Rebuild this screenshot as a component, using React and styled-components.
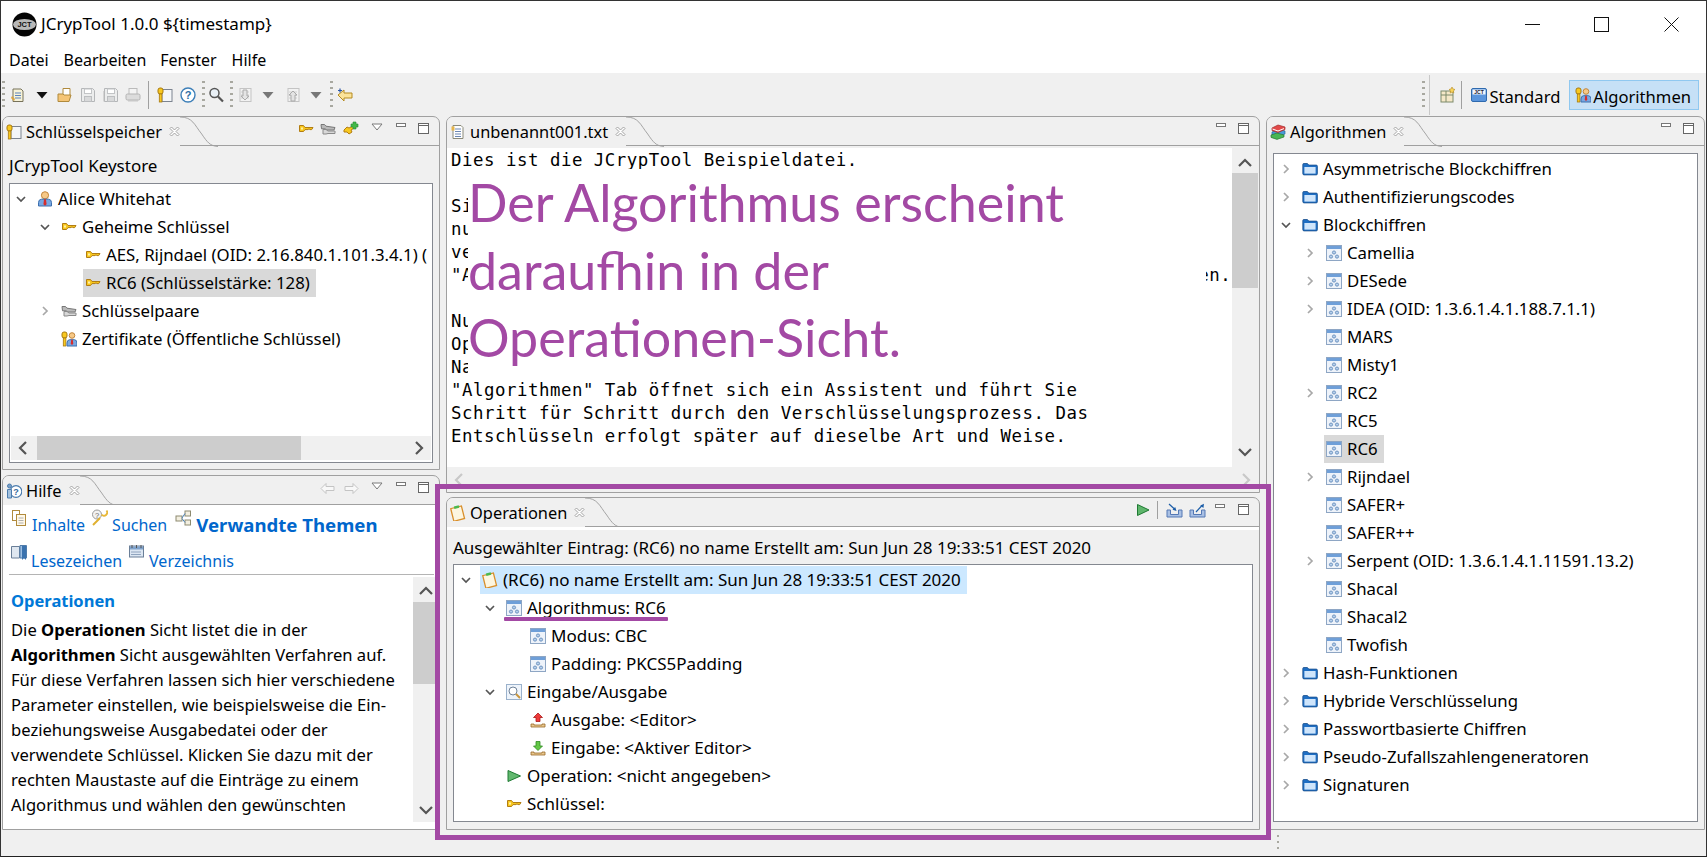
import React from "react";
import styled, { createGlobalStyle } from "styled-components";

const Global = createGlobalStyle`
  html, body { margin: 0; padding: 0; background: #f0f0f0; }
  * { box-sizing: border-box; }
`;
const UI = `"Noto Sans", "Open Sans", sans-serif`;

const Win = styled.div`
  position: relative; width: 1707px; height: 857px; overflow: hidden;
  display: flex; flex-direction: column; border: 1px solid #333; border-bottom-color: #222;
  background: #f0f0f0; color: #000; font: 16px/22px ${UI};
`;
const TitleBar = styled.div`display: flex; align-items: center; height: 46px; background: #fff; padding-left: 11px;`;
const TitleText = styled.span`margin-left: 4px; font-size: 17px;`;
const WinControls = styled.div`display: flex; margin-left: auto; height: 100%;`;
const WinBtn = styled.div`display: flex; align-items: center; justify-content: center; width: ${p => p.$w}px;`;
const MenuBar = styled.div`display: flex; height: 26px; align-items: center; background: #fff; padding-left: 8px; font-size: 16px;`;
const MenuItem = styled.span`margin-right: ${p => p.$mr}px;`;

const Toolbar = styled.div`display: flex; align-items: center; height: 43px; padding: 0 7px 0 1px;`;
const Slot = styled.div`display: flex; margin-left: ${p => p.$ml}px; margin-top: ${p => p.$mt || 0}px; flex: none;`;
const Grip = styled.div`
  width: 3px; height: 28px; margin-left: ${p => p.$ml}px; flex: none;
  background: repeating-linear-gradient(to bottom, #a8a8a0 0 2px, transparent 2px 6px);
`;
const VSep = styled.div`width: 1px; height: ${p => p.$h || 28}px; background: #a0a0a0; margin-left: ${p => p.$ml}px; flex: none;`;
const Perspectives = styled.div`display: flex; align-items: center; margin-left: auto; height: 100%;`;
const PerspBar = styled.div`
  display: flex; align-items: center; height: 40px; margin-left: 4px; padding-left: 10px; border-left: 1px solid #c8c8c8;
`;
const PerspBtn = styled.div`
  display: flex; align-items: center; gap: 2px; height: 30px; padding: 0 7px 0 5px; font-size: 16.6px;
  margin-left: ${p => p.$ml}px;
  background: ${p => p.$on ? "#c6e0f6" : "transparent"};
  border: 1px solid ${p => p.$on ? "#90c8f0" : "transparent"};
  span { position: relative; top: 2px; }
`;

const Main = styled.div`
  flex: 1; display: grid; grid-template-columns: 438px 814px 439px; column-gap: 6px; padding: 0 1px; min-height: 0;
`;
const Col = styled.div`display: flex; flex-direction: column; gap: ${p => p.$gap}px; min-height: 0;`;
const Panel = styled.section`
  display: flex; flex-direction: column; height: ${p => p.$h ? p.$h + "px" : "100%"}; flex: none;
  border: 1px solid #a0a0a0; border-radius: 7px 7px 0 0; background: #f0f0f0; min-width: 0; overflow: hidden;
`;
const TabBar = styled.div`
  display: flex; align-items: stretch; height: 29px; flex: none; border-bottom: 1px solid #a0a0a0;
`;
const Tab = styled.div`
  display: flex; align-items: center; padding-left: 3px; margin-bottom: -1px; background: #f0f0f0; height: 29px;
  font-size: ${p => p.$fs || 16.4}px;
`;
const TabLabel = styled.span`margin-left: 4px;`;
const TabClose = styled.span`display: flex; margin-left: 7px;`;
const TabCurve = styled.svg`width: 38px; height: 30px; margin-bottom: -1px; flex: none; display: block;`;
const TabTools = styled.div`display: flex; align-items: center; margin-left: auto; padding: 0 10px 4px 0;`;

const Pad = styled.div`
  flex: 1; min-height: 0; display: flex; flex-direction: column; padding: 0 ${p => p.$x}px ${p => p.$b}px;
  border-top: ${p => p.$stripe ? "3px solid #fff" : "none"};
`;
const Caption = styled.div`
  height: ${p => p.$h}px; display: flex; align-items: center; flex: none; white-space: nowrap; font-size: 17px;
  padding-top: ${p => p.$t || 0}px;
`;
const TreeBox = styled.div`
  flex: 1; min-height: 0; background: #fff; border: 1px solid #848890; display: flex; flex-direction: column;
  padding-top: 1px; overflow: hidden;
`;
const Rows = styled.div`flex: 1; min-height: 0; overflow: hidden; font-size: ${p => p.$fs}px;`;
const Row = styled.div`
  display: flex; align-items: center; height: 28px; white-space: nowrap;
  padding-left: ${p => p.$base + p.$level * 24}px;
`;
const Twist = styled.div`display: flex; align-items: center; justify-content: center; width: 16px; flex: none;`;
const Item = styled.div`
  display: flex; align-items: center; gap: 5px; height: 28px; margin-left: 6px; padding: 0 6px 0 2px;
  background: ${p => p.$sel === "blue" ? "#cce8ff" : p.$sel ? "#d9d9d9" : "transparent"};
`;
const Underlined = styled.span`
  position: relative;
  &::after { content: ""; position: absolute; left: -23px; right: -2px; bottom: -2px; height: 4px; background: #a349a4; border-radius: 1px; }
`;

const HBar = styled.div`
  display: flex; align-items: center; height: ${p => p.$h}px; margin: ${p => p.$m || "0"}; background: #f0f0f0; flex: none;
`;
const HArrow = styled.div`width: 26px; display: flex; justify-content: center; flex: none; height: 100%; align-items: center;`;
const HTrack = styled.div`flex: 1; height: 100%;`;
const HThumb = styled.div`height: 100%; width: ${p => p.$w}px; background: #cdcdcd;`;
const VBar = styled.div`
  display: flex; flex-direction: column; width: ${p => p.$w}px; background: #f0f0f0; flex: none;
`;
const VArrow = styled.div`
  height: 25px; flex: none; display: flex; align-items: center; justify-content: center;
  padding-top: ${p => p.$pt || 0}px; padding-bottom: ${p => p.$pb || 0}px;
`;
const VTrack = styled.div`flex: 1; min-height: 0;`;
const VThumb = styled.div`height: ${p => p.$h}px; background: #cdcdcd;`;

const EditorBody = styled.div`position: relative; flex: 1; min-height: 0; display: flex; flex-direction: column; padding: 2px 1px 0 0;`;
const EditorTop = styled.div`flex: 1; min-height: 0; display: flex;`;
const Code = styled.pre`
  flex: 1; margin: 0; padding: 1px 0 0 4px; background: #fff; overflow: hidden;
  font: 17.4px/23px "DejaVu Sans Mono", "Liberation Mono", monospace; letter-spacing: 0.52px;
`;
const Callout = styled.div`
  position: absolute; left: 21px; top: 23px; width: 738px; height: 208px; background: #fff;
  color: #a349a4; font: 52px/67.5px Lato, "Open Sans", sans-serif; white-space: nowrap;
`;
const AnnotationFrame = styled.div`
  position: absolute; left: 434px; top: 483px; width: 836px; height: 356px; border: 5px solid #a349a4; pointer-events: none;
`;

const HelpBody = styled.div`flex: 1; min-height: 0; background: #fff; display: flex; flex-direction: column; padding-top: 2px;`;
const LinkRow = styled.div`display: flex; align-items: flex-start; height: ${p => p.$h}px; flex: none; padding-left: ${p => p.$l}px;`;
const HelpLink = styled.a`
  color: #0066cc; margin-left: ${p => p.$ml}px; margin-top: ${p => p.$mt}px; font-size: ${p => p.$b ? 18.6 : 16}px; font-weight: ${p => p.$b ? 700 : 400};
  white-space: nowrap;
`;
const IconAt = styled.div`display: flex; margin-left: ${p => p.$ml}px; margin-top: ${p => p.$mt}px; flex: none;`;
const HelpRule = styled.div`height: 1px; background: #b4b4b4; margin: 0 5px 0 6px; flex: none;`;
const HelpMain = styled.div`flex: 1; min-height: 0; display: flex; padding: 2px 0 7px;`;
const HelpText = styled.div`flex: 1; padding: 12px 0 0 8px; overflow: hidden; white-space: nowrap; font-size: 16.6px;`;
const HelpHead = styled.div`color: #0078d7; font-weight: 700; font-size: 16.5px; line-height: 25px; margin-bottom: 3px; margin-top: -1px;`;
const HelpLine = styled.div`line-height: 25px; height: 25px; position: relative; top: 1px;`;
const StatusBar = styled.div`height: 26px; flex: none; position: relative; display: flex; align-items: center; padding-left: 1276px;`;
const StatusGrip = styled.div`width: 2px; height: 16px; background: repeating-linear-gradient(to bottom, #a8a8a0 0 2px, transparent 2px 6px);`;

/* ------- icons ------- */
const Svg = ({ w = 16, h = 16, children, vb }) => <svg width={w} height={h} viewBox={vb || `0 0 ${w} ${h}`} style={{ display: "block", flex: "none" }}>{children}</svg>;
const Down = ({ c = "#555" }) => <Svg w={12} h={12}><path d="M2 4l4 4 4-4" fill="none" stroke={c} strokeWidth="1.7" /></Svg>;
const Right = ({ c = "#a8a8a8" }) => <Svg w={12} h={12}><path d="M4 2l4 4-4 4" fill="none" stroke={c} strokeWidth="1.7" /></Svg>;
const Key = () => <Svg><path d="M1.5 4.5H5.5L7 6.5H15L13.7 8.6H12L11 7.8 10 8.6H7L5.5 10.5H1.5Z" fill="#f8c81e" stroke="#b27d12" /><path d="M3 6.5h2v2H3z" fill="#fff0a8" /></Svg>;
const KeyPair = () => <Svg><path d="M1 3.5H4.5L6 5.2 15 6.5 14 9H7L5 7.8H1.5Z" fill="#b9b9b9" stroke="#777" /><path d="M3 8.5H6L8 10H15V12.5H8L6 13H3Z" fill="#d8d8d8" stroke="#8a8a8a" /></Svg>;
const KeyAdd = () => <Svg w={16} h={16}><path d="M1 9l3-3 2 1 6-3 1 2-5 3 1 2-3 2-2-2-3 0z" fill="#f8c81e" stroke="#b27d12" /><path d="M10 1h3v2h2v3h-2v2h-3V6H8V3h2z" fill="#42b84a" stroke="#2a8a32" strokeWidth=".6" /></Svg>;
const KeyBlock = () => <Svg><rect x="5" y="2.5" width="10" height="12" fill="#f4f6f8" stroke="#7c8490" /><rect x="1" y="1" width="5" height="6" rx="2" fill="#f8c81e" stroke="#a87a10" /><rect x="2.3" y="7" width="2.6" height="8" fill="#f8c81e" stroke="#a87a10" strokeWidth=".8" /></Svg>;
const Algo = () => <Svg><rect x=".5" y=".5" width="15" height="15" fill="#eef3fa" stroke="#8ea6c4" /><rect x="1" y="1" width="14" height="3" fill="#6f9fd8" /><circle cx="8" cy="7.5" r="1.6" fill="#b7d0ec" stroke="#4c78ad" strokeWidth=".7" /><circle cx="5" cy="11.6" r="1.6" fill="#b7d0ec" stroke="#4c78ad" strokeWidth=".7" /><circle cx="11" cy="11.6" r="1.6" fill="#b7d0ec" stroke="#4c78ad" strokeWidth=".7" /></Svg>;
const Folder = () => <Svg><path d="M.8 3.5q0-1 1-1h3.6l1.4 1.6h7.4q1.2 0 1.2 1.2v7.4q0 1.2-1.2 1.2H2q-1.2 0-1.2-1.2z" fill="#1f6fc4" stroke="#1a4f8c" strokeWidth=".8" /><rect x="2.4" y="6" width="11.2" height="6.6" fill="#cfe5fb" /></Svg>;
const User = () => <Svg><circle cx="8" cy="4.3" r="3.6" fill="#f7c987" stroke="#c2853a" /><path d="M1.5 15v-3.5q0-3 3-3.3h7q3 .3 3 3.3V15z" fill="#78a8e2" stroke="#3c6fae" /><path d="M7 8.2h2l.6 5-1.6 1.6-1.6-1.6z" fill="#d62d2d" /></Svg>;
const Cert = () => <Svg><rect x="1" y="1" width="5" height="6" rx="2" fill="#f8c81e" stroke="#a87a10" /><rect x="2.3" y="7" width="2.6" height="8" fill="#f8c81e" stroke="#a87a10" strokeWidth=".8" /><circle cx="11" cy="4.5" r="2.8" fill="#f7c987" stroke="#c2853a" /><path d="M6 15v-3q0-3 2.5-3.3h5Q16 9 16 12v3z" fill="#78a8e2" stroke="#3c6fae" /><path d="M10.2 8.7h1.6l.5 4-1.3 1.4-1.3-1.4z" fill="#d62d2d" /></Svg>;
const Close = () => <Svg w={11} h={11}><path d="M1 2.5L2.5 1 5.5 4 8.5 1 10 2.5 7 5.5 10 8.5 8.5 10 5.5 7 2.5 10 1 8.5 4 5.5Z" fill="#fff" stroke="#9a9a9a" strokeWidth=".9" /></Svg>;
const ViewMenu = () => <Svg w={12} h={8}><path d="M1 1h10L6 7z" fill="#fff" stroke="#7a7a7a" /></Svg>;
const Min = () => <Svg w={10} h={10}><rect x=".5" y="1.5" width="9" height="3" fill="#fff" stroke="#777" /></Svg>;
const Max = () => <Svg w={11} h={11}><rect x=".5" y=".5" width="10" height="10" fill="#fff" stroke="#666" /><path d="M.5 2.5h10" stroke="#666" /></Svg>;
const Books = () => <Svg><path d="M2 8l6-3 7 2v3l-7 3-6-2z" fill="#4a9ad8" stroke="#2a6a9c" strokeWidth=".7" /><path d="M1 11l6-2 7 2v2l-7 2.4-6-2z" fill="#49b654" stroke="#2a7a34" strokeWidth=".7" /><path d="M2 4l6-3 7 2v2.5l-7 3-6-2z" fill="#e24a4a" stroke="#a02a2a" strokeWidth=".7" /><path d="M2.5 5l5.5 2 6-2.4" stroke="#fff" fill="none" /></Svg>;
const Notes = () => <Svg><rect x="2" y="2" width="11" height="13" transform="rotate(-14 8 8)" fill="#fdf6e0" stroke="#d98f2b" strokeWidth="1.3" /><rect x="4" y="1" width="5" height="2.5" transform="rotate(-14 6 2)" fill="#4bb84f" /></Svg>;
const TxtDoc = () => <Svg><path d="M3 1.5h8l2 2v11H3z" fill="#fff" stroke="#8a8a7a" /><path d="M5 5h6M5 7.5h6M5 10h6M5 12.5h6" stroke="#6b87b3" /><path d="M1.5 2.5l3 0 0 4-3 0z" fill="#e6b54a" /></Svg>;
const Grn = ({ s = 14 }) => <Svg w={s} h={s}><path d="M1.5 1.5L13 7 1.5 12.5Z" fill="#5fb66c" stroke="#1f7a33" /></Svg>;
const InTray = () => <Svg w={17} h={15}><path d="M1 7h3.5v4.5h8V7H16v7H1z" fill="#a9c0e4" stroke="#5478b4" /><path d="M3 1l6 5.5" stroke="#1d5ea8" strokeWidth="1.2" /><path d="M10.5 8L6.5 6.8 9.2 4z" fill="#1d5ea8" /></Svg>;
const OutTray = () => <Svg w={17} h={15}><path d="M1 7h3.5v4.5h8V7H16v7H1z" fill="#a9c0e4" stroke="#5478b4" /><path d="M7 9l6-6.5" stroke="#1d5ea8" strokeWidth="1.2" /><path d="M15 .8L14.4 5 11.3 2.4z" fill="#1d5ea8" /></Svg>;
const Mag = () => <Svg><rect x=".5" y=".5" width="15" height="15" fill="#eef4fb" stroke="#9bb2cc" /><circle cx="7" cy="7" r="4" fill="#fff" stroke="#6f8299" /><path d="M10 10l4 4" stroke="#c9953c" strokeWidth="2" /></Svg>;
const TrayUp = () => <Svg><path d="M8 1l4.5 4.5H10v4H6v-4H3.5z" fill="#ee3a3a" stroke="#a81818" strokeWidth=".8" /><path d="M1 12h3v1h8v-1h3v3H1z" fill="#e8c78e" stroke="#9a6a2a" strokeWidth=".8" /></Svg>;
const TrayDown = () => <Svg><path d="M8 10.5L3.5 6H6V1.5h4V6h2.5z" fill="#63c745" stroke="#2d8a22" strokeWidth=".8" /><path d="M1 12h3v1h8v-1h3v3H1z" fill="#e8c78e" stroke="#9a6a2a" strokeWidth=".8" /></Svg>;
const Play = () => <Svg><path d="M2 2.5L14.5 8 2 13.5Z" fill="#62b96f" stroke="#1f7a33" /></Svg>;
const Logo = () => <svg width="25" height="25" viewBox="0 0 25 25" style={{ display: "block", flex: "none" }}><circle cx="12.5" cy="12.5" r="12" fill="#050505" /><ellipse cx="12.5" cy="12.5" rx="11.5" ry="5.5" fill="#b8b8b8" /><text x="12.5" y="15.4" textAnchor="middle" fontSize="7.5" fontWeight="700" fontFamily="Liberation Sans" fill="#111">JCT</text></svg>;

const NewDoc = () => <Svg><path d="M3 2h8l2 2v10.5H3z" fill="#f6f2d8" stroke="#77725a" /><path d="M5 6h6M5 8.5h6M5 11h6" stroke="#5a82bd" /><path d="M2 9l3 3-1 2-3-3z" fill="#d9a441" /></Svg>;
const OpenF = () => <Svg><path d="M6 1.5h7v8H6z" fill="#fff" stroke="#b08a3c" /><path d="M1 7h5l1 1h7l-2 6.5H1z" fill="#f5c576" stroke="#b08a3c" /></Svg>;
const Save = ({ extra }) => <Svg><path d="M1.5 1.5h11l2 2v11h-13z" fill="#eceded" stroke="#b4b6b8" /><rect x="4.5" y="2" width="7" height="4.5" fill="#fff" stroke="#c2c4c6" /><rect x="4.5" y="9.5" width="7" height="5" fill="#d8d9da" stroke="#bcbec0" />{extra && <path d="M1 4v10.5" stroke="#bbb" />}</Svg>;
const Printer = () => <Svg><rect x="4" y="1.5" width="8" height="6" fill="#f4f4f4" stroke="#bbb" /><rect x="1" y="7" width="14" height="6" rx="1.5" fill="#dcdcdc" stroke="#b4b4b4" /><rect x="3" y="12" width="10" height="2.5" fill="#c8c8c8" /></Svg>;
const Help = () => <Svg><circle cx="8" cy="8" r="7" fill="#fff" stroke="#3d7fb8" strokeWidth="1.4" /><text x="8" y="12" textAnchor="middle" fontSize="11" fontWeight="700" fontFamily="Liberation Sans" fill="#2c6ea6">?</text></Svg>;
const Search = () => <Svg><circle cx="6.5" cy="6" r="4.5" fill="#e9f0f6" stroke="#555" strokeWidth="1.5" /><path d="M10 9.5l5 5" stroke="#555" strokeWidth="2.2" /></Svg>;
const GrayArrowDoc = ({ up }) => <Svg><rect x="3" y="1.5" width="11" height="13" fill="#f2f2f2" stroke="#c4c4c4" /><path d="M4 5h8M4 8h8M4 11h8" stroke="#d0d0d0" />{up ? <path d="M8 4l4 4h-2v6H6V8H4z" fill="#e4e4e4" stroke="#aaa" /> : <path d="M8 13l4-4h-2V3H6v6H4z" fill="#e4e4e4" stroke="#aaa" />}</Svg>;
const Back = () => <Svg><path d="M1 8l6-5v3h8v5H7v3z" fill="#fbe39a" stroke="#b58a1e" /><path d="M3 1.5v4M1 3.5h4" stroke="#2855a8" strokeWidth="1.2" /></Svg>;
const Caret = ({ c }) => <Svg w={12} h={8}><path d="M.5 1h11L6 7.5z" fill={c} /></Svg>;
const Layout = () => <Svg><rect x="1" y="4" width="12" height="11" fill="#f5e8c8" stroke="#7d8a6a" /><path d="M1 8h12M6 4v11" stroke="#7d8a6a" /><path d="M12 0l1 2 2 .5-1.6 1.4.4 2.1-1.8-1-1.8 1 .4-2.1L9 2.5l2-.5z" fill="#f8d45a" stroke="#b58a1e" strokeWidth=".6" /></Svg>;
const JctPersp = () => <Svg><rect x=".5" y="1.5" width="15" height="13" rx="1.5" fill="#5a95dc" stroke="#2f6aae" /><rect x="1.5" y="2.5" width="13" height="5" fill="#f0f5fb" /><text x="8" y="7.2" textAnchor="middle" fontSize="5" fontWeight="700" fontFamily="Liberation Sans" fill="#223">JCT</text></Svg>;
const Pages = () => <Svg w={14} h={16}><rect x=".5" y=".5" width="7" height="10" fill="#fff" stroke="#b08a3c" /><rect x="4.5" y="4.5" width="9" height="11" fill="#fff8e8" stroke="#b08a3c" /><path d="M6.5 8h5M6.5 10.5h5M6.5 13h5" stroke="#b0b0b0" /></Svg>;
const SearchKey = () => <Svg w={17} h={17}><circle cx="6" cy="5.5" r="4.5" fill="#f2f2f2" stroke="#999" /><text x="6" y="8.5" textAnchor="middle" fontSize="7.5" fontFamily="Liberation Sans" fill="#666">?</text><path d="M2 16l7-7" stroke="#e0b030" strokeWidth="2" /><path d="M15.5 1.5a3 3 0 0 1-5 4" fill="none" stroke="#e8b838" strokeWidth="2" /></Svg>;
const Topics = () => <Svg><rect x="1" y="6" width="6" height="5" fill="#f3efe0" stroke="#8d8a70" /><rect x="10" y="1" width="5.5" height="5" fill="#f3efe0" stroke="#8d8a70" /><rect x="10" y="10" width="5.5" height="5" fill="#f3efe0" stroke="#8d8a70" /><path d="M7 8l3-4.5M7 8.5l3 4" stroke="#4a82b8" /></Svg>;
const BookM = () => <Svg><path d="M.5 1.5h8v11.5h-8z" fill="#dfe7f0" stroke="#6a7f98" /><path d="M9 .5h6.5v12.5H9z" fill="#9dbfe2" stroke="#4f7cab" /><path d="M11 1v14l2-2 2 2V1z" fill="#3a72ae" /></Svg>;
const Index = () => <Svg w={15} h={14}><rect x=".5" y="1" width="14" height="11" fill="#dce6f2" stroke="#6a7f98" /><rect x="1" y="1.5" width="13" height="3" fill="#7ea2cc" /><path d="M2.5 7h10M2.5 9.5h10" stroke="#45628a" strokeDasharray="1 1" /><path d="M3 0v3M7.5 0v3M12 0v3" stroke="#555" /></Svg>;
const HelpTab = () => <Svg><circle cx="10" cy="8.5" r="5.8" fill="#fff" stroke="#4b7cae" strokeWidth="1.2" /><text x="10" y="12" textAnchor="middle" fontSize="9" fontWeight="700" fontFamily="Liberation Sans" fill="#35689c">?</text><circle cx="3.5" cy="3" r="2" fill="#7aa0c8" stroke="#4b7cae" /><path d="M1.5 15V6.5h4V15z" fill="#a3c1de" stroke="#4b7cae" /></Svg>;
const NavArrow = ({ left }) => <Svg w={15} h={13}><path d={left ? "M1 6.5L6 1.5v3h8v4H6v3z" : "M14 6.5L9 1.5v3H1v4h8v3z"} fill="#f8f8f8" stroke="#c4c4c4" /></Svg>;
const Chevron = ({ dir, c = "#555" }) => {
  const d = { up: "M2 10l6-6 6 6", down: "M2 5l6 6 6-6", left: "M10 2L4 8l6 6", right: "M6 2l6 6-6 6" }[dir];
  return <Svg><path d={d} fill="none" stroke={c} strokeWidth="2.2" /></Svg>;
};

/* ------- parts ------- */
const Curve = () => (
  <TabCurve viewBox="0 0 42 30" preserveAspectRatio="none">
    <path d="M0 0 C14 0 16 8 24 17 C30 25 33 29 42 29.5" fill="none" stroke="#a0a0a0" />
  </TabCurve>
);
const PanelTab = ({ icon, label }) => (
  <>
    <Tab>{icon}<TabLabel>{label}</TabLabel><TabClose><Close /></TabClose></Tab>
    <Curve />
  </>
);
const Tree = ({ rows, base, fs }) => (
  <Rows $fs={fs}>
    {rows.map((r, i) => (
      <Row key={i} $level={r.l} $base={base}>
        <Twist>{r.t === "d" ? <Down /> : r.t === "r" ? <Right /> : null}</Twist>
        <Item $sel={r.sel}>{r.i}{r.u ? <Underlined>{r.x}</Underlined> : <span>{r.x}</span>}</Item>
      </Row>
    ))}
  </Rows>
);

const ksRows = [
  { l: 0, t: "d", i: <User />, x: "Alice Whitehat" },
  { l: 1, t: "d", i: <Key />, x: "Geheime Schlüssel" },
  { l: 2, i: <Key />, x: "AES, Rijndael (OID: 2.16.840.1.101.3.4.1) (" },
  { l: 2, i: <Key />, x: "RC6 (Schlüsselstärke: 128)", sel: true },
  { l: 1, t: "r", i: <KeyPair />, x: "Schlüsselpaare" },
  { l: 1, i: <Cert />, x: "Zertifikate (Öffentliche Schlüssel)" },
];
const opRows = [
  { l: 0, t: "d", i: <Notes />, x: "(RC6) no name Erstellt am: Sun Jun 28 19:33:51 CEST 2020", sel: "blue" },
  { l: 1, t: "d", i: <Algo />, x: "Algorithmus: RC6", u: true },
  { l: 2, i: <Algo />, x: "Modus: CBC" },
  { l: 2, i: <Algo />, x: "Padding: PKCS5Padding" },
  { l: 1, t: "d", i: <Mag />, x: "Eingabe/Ausgabe" },
  { l: 2, i: <TrayUp />, x: "Ausgabe: <Editor>" },
  { l: 2, i: <TrayDown />, x: "Eingabe: <Aktiver Editor>" },
  { l: 1, i: <Play />, x: "Operation: <nicht angegeben>" },
  { l: 1, i: <Key />, x: "Schlüssel:" },
];
const fol = (x, t = "r") => ({ l: 0, t, i: <Folder />, x });
const alg = (x, t, sel) => ({ l: 1, t, i: <Algo />, x, sel });
const algRows = [
  fol("Asymmetrische Blockchiffren"), fol("Authentifizierungscodes"), fol("Blockchiffren", "d"),
  alg("Camellia", "r"), alg("DESede", "r"), alg("IDEA (OID: 1.3.6.1.4.1.188.7.1.1)", "r"), alg("MARS"), alg("Misty1"),
  alg("RC2", "r"), alg("RC5"), alg("RC6", null, true), alg("Rijndael", "r"), alg("SAFER+"), alg("SAFER++"),
  alg("Serpent (OID: 1.3.6.1.4.1.11591.13.2)", "r"), alg("Shacal"), alg("Shacal2"), alg("Twofish"),
  fol("Hash-Funktionen"), fol("Hybride Verschlüsselung"), fol("Passwortbasierte Chiffren"), fol("Pseudo-Zufallszahlengeneratoren"), fol("Signaturen"),
];
const codeText = `Dies ist die JCrypTool Beispieldatei.

Sie können diese Datei direkt verschlüsseln oder
nutzen Sie eine eigene Datei. Zum
verschlüsseln wählen Sie in der
"Algorithmen" Menü ein Verfahren aus oder nutzen Sie Sicht Algorithmen.

Nun erscheint es nach dem Doppelklick in der
Operationen Sicht.
Nach einem Doppelklick im
"Algorithmen" Tab öffnet sich ein Assistent und führt Sie
Schritt für Schritt durch den Verschlüsselungsprozess. Das
Entschlüsseln erfolgt später auf dieselbe Art und Weise.`;
const toolItems = [
  ["g", 0], [<NewDoc />, 5], [<Caret c="#111" />, 10], [<OpenF />, 9], [<Save />, 7], [<Save extra />, 7], [<Printer />, 6], ["s", 7],
  [<KeyBlock />, 8], [<Help />, 7], ["g", 6], [<Search />, 3], ["g", 6], [<GrayArrowDoc />, 4], [<Caret c="#777" />, 9],
  [<GrayArrowDoc up />, 11], [<Caret c="#777" />, 9], ["g", 8], [<Back />, 4],
];
const helpLines = [
  <>Die <b>Operationen</b> Sicht listet die in der</>,
  <><b>Algorithmen</b> Sicht ausgewählten Verfahren auf.</>,
  "Für diese Verfahren lassen sich hier verschiedene",
  "Parameter einstellen, wie beispielsweise die Ein-",
  "beziehungsweise Ausgabedatei oder der",
  "verwendete Schlüssel. Klicken Sie dazu mit der",
  "rechten Maustaste auf die Einträge zu einem",
  "Algorithmus und wählen den gewünschten",
];

export default function App() {
  return (
    <Win>
      <Global />
      <TitleBar>
        <Logo />
        <TitleText>JCrypTool 1.0.0 {"${timestamp}"}</TitleText>
        <WinControls>
          <WinBtn $w={67}><Svg w={15} h={3}><path d="M0 1.5h15" stroke="#111" /></Svg></WinBtn>
          <WinBtn $w={70}><Svg w={15} h={15}><rect x=".5" y=".5" width="14" height="14" fill="none" stroke="#111" /></Svg></WinBtn>
          <WinBtn $w={70}><Svg w={15} h={15}><path d="M.5.5l14 14M14.5.5l-14 14" stroke="#111" /></Svg></WinBtn>
        </WinControls>
      </TitleBar>
      <MenuBar>
        <MenuItem $mr={15}>Datei</MenuItem>
        <MenuItem $mr={14}>Bearbeiten</MenuItem>
        <MenuItem $mr={15}>Fenster</MenuItem>
        <MenuItem $mr={0}>Hilfe</MenuItem>
      </MenuBar>
      <Toolbar>
        {toolItems.map(([it, ml], i) =>
          it === "g" ? <Grip key={i} $ml={ml} /> : it === "s" ? <VSep key={i} $ml={ml} /> : <Slot key={i} $ml={ml}>{it}</Slot>
        )}
        <Perspectives>
          <Grip $ml={0} />
          <PerspBar>
            <Slot $ml={0}><Layout /></Slot>
            <VSep $ml={5} />
            <PerspBtn $ml={3}><JctPersp /><span>Standard</span></PerspBtn>
            <PerspBtn $ml={1} $on><Cert /><span>Algorithmen</span></PerspBtn>
          </PerspBar>
        </Perspectives>
      </Toolbar>
      <Main>
        <Col $gap={5}>
          <Panel $h={354}>
            <TabBar>
              <PanelTab icon={<KeyBlock />} label="Schlüsselspeicher" />
              <TabTools>
                <Slot $ml={0}><Key /></Slot><Slot $ml={6}><KeyPair /></Slot><Slot $ml={7}><KeyAdd /></Slot>
                <Slot $ml={12} $mt={-5}><ViewMenu /></Slot><Slot $ml={13} $mt={-5}><Min /></Slot><Slot $ml={12} $mt={-1}><Max /></Slot>
              </TabTools>
            </TabBar>
            <Pad $x={6} $b={6}>
              <Caption $h={37} $t={3}>JCrypTool Keystore</Caption>
              <TreeBox>
                <Tree rows={ksRows} base={3} fs={16.8} />
                <HBar $h={24} $m="2px 1px">
                  <HArrow><Chevron dir="left" /></HArrow>
                  <HTrack><HThumb $w={264} /></HTrack>
                  <HArrow><Chevron dir="right" /></HArrow>
                </HBar>
              </TreeBox>
            </Pad>
          </Panel>
          <Panel $h={355}>
            <TabBar>
              <PanelTab icon={<HelpTab />} label="Hilfe" />
              <TabTools>
                <Slot $ml={0}><NavArrow left /></Slot><Slot $ml={9}><NavArrow /></Slot>
                <Slot $ml={12} $mt={-5}><ViewMenu /></Slot><Slot $ml={13} $mt={-5}><Min /></Slot><Slot $ml={12} $mt={-1}><Max /></Slot>
              </TabTools>
            </TabBar>
            <HelpBody>
              <LinkRow $h={34} $l={9}>
                <IconAt $ml={0} $mt={3}><Pages /></IconAt><HelpLink $ml={6} $mt={7}>Inhalte</HelpLink>
                <IconAt $ml={6} $mt={2}><SearchKey /></IconAt><HelpLink $ml={4} $mt={7}>Suchen</HelpLink>
                <IconAt $ml={8} $mt={3}><Topics /></IconAt><HelpLink $ml={5} $mt={7} $b>Verwandte Themen</HelpLink>
              </LinkRow>
              <LinkRow $h={33} $l={8}>
                <IconAt $ml={0} $mt={4}><BookM /></IconAt><HelpLink $ml={4} $mt={9}>Lesezeichen</HelpLink>
                <IconAt $ml={7} $mt={4}><Index /></IconAt><HelpLink $ml={5} $mt={9}>Verzeichnis</HelpLink>
              </LinkRow>
              <HelpRule />
              <HelpMain>
                <HelpText>
                  <HelpHead>Operationen</HelpHead>
                  {helpLines.map((l, i) => <HelpLine key={i}>{l}</HelpLine>)}
                </HelpText>
                <VBar $w={26}>
                  <VArrow $pt={4}><Chevron dir="up" /></VArrow>
                  <VTrack><VThumb $h={82} /></VTrack>
                  <VArrow><Chevron dir="down" /></VArrow>
                </VBar>
              </HelpMain>
            </HelpBody>
          </Panel>
        </Col>
        <Col $gap={4}>
          <Panel $h={377}>
            <TabBar>
              <PanelTab icon={<TxtDoc />} label="unbenannt001.txt" />
              <TabTools>
                <Slot $ml={0} $mt={-5}><Min /></Slot><Slot $ml={12} $mt={-1}><Max /></Slot>
              </TabTools>
            </TabBar>
            <EditorBody>
              <EditorTop>
                <Code>{codeText}</Code>
                <VBar $w={26}>
                  <VArrow $pt={6}><Chevron dir="up" /></VArrow>
                  <VTrack><VThumb $h={115} /></VTrack>
                  <VArrow $pb={6}><Chevron dir="down" /></VArrow>
                </VBar>
              </EditorTop>
              <HBar $h={25}>
                <HArrow><Chevron dir="left" c="#c8c8c8" /></HArrow>
                <HTrack />
                <HArrow><Chevron dir="right" c="#c8c8c8" /></HArrow>
              </HBar>
              <Callout>Der Algorithmus erscheint<br />daraufhin in der<br />Operationen-Sicht.</Callout>
            </EditorBody>
          </Panel>
          <Panel $h={333}>
            <TabBar>
              <PanelTab icon={<Notes />} label="Operationen" />
              <TabTools>
                <Slot $ml={0}><Grn /></Slot><VSep $ml={7} $h={18} />
                <Slot $ml={8}><InTray /></Slot><Slot $ml={6}><OutTray /></Slot>
                <Slot $ml={9} $mt={-5}><Min /></Slot><Slot $ml={13} $mt={-1}><Max /></Slot>
              </TabTools>
            </TabBar>
            <Pad $x={6} $b={7} $stripe>
              <Caption $h={34} $t={1}>Ausgewählter Eintrag: (RC6) no name Erstellt am: Sun Jun 28 19:33:51 CEST 2020</Caption>
              <TreeBox><Tree rows={opRows} base={4} fs={17} /></TreeBox>
            </Pad>
          </Panel>
        </Col>
        <Col $gap={0}>
          <Panel>
            <TabBar>
              <PanelTab icon={<Books />} label="Algorithmen" />
              <TabTools>
                <Slot $ml={0} $mt={-5}><Min /></Slot><Slot $ml={12} $mt={-1}><Max /></Slot>
              </TabTools>
            </TabBar>
            <Pad $x={6} $b={7}>
              <Caption $h={7} />
              <TreeBox><Tree rows={algRows} base={4} fs={16.8} /></TreeBox>
            </Pad>
          </Panel>
        </Col>
      </Main>
      <StatusBar><StatusGrip /></StatusBar>
      <AnnotationFrame />
    </Win>
  );
}
